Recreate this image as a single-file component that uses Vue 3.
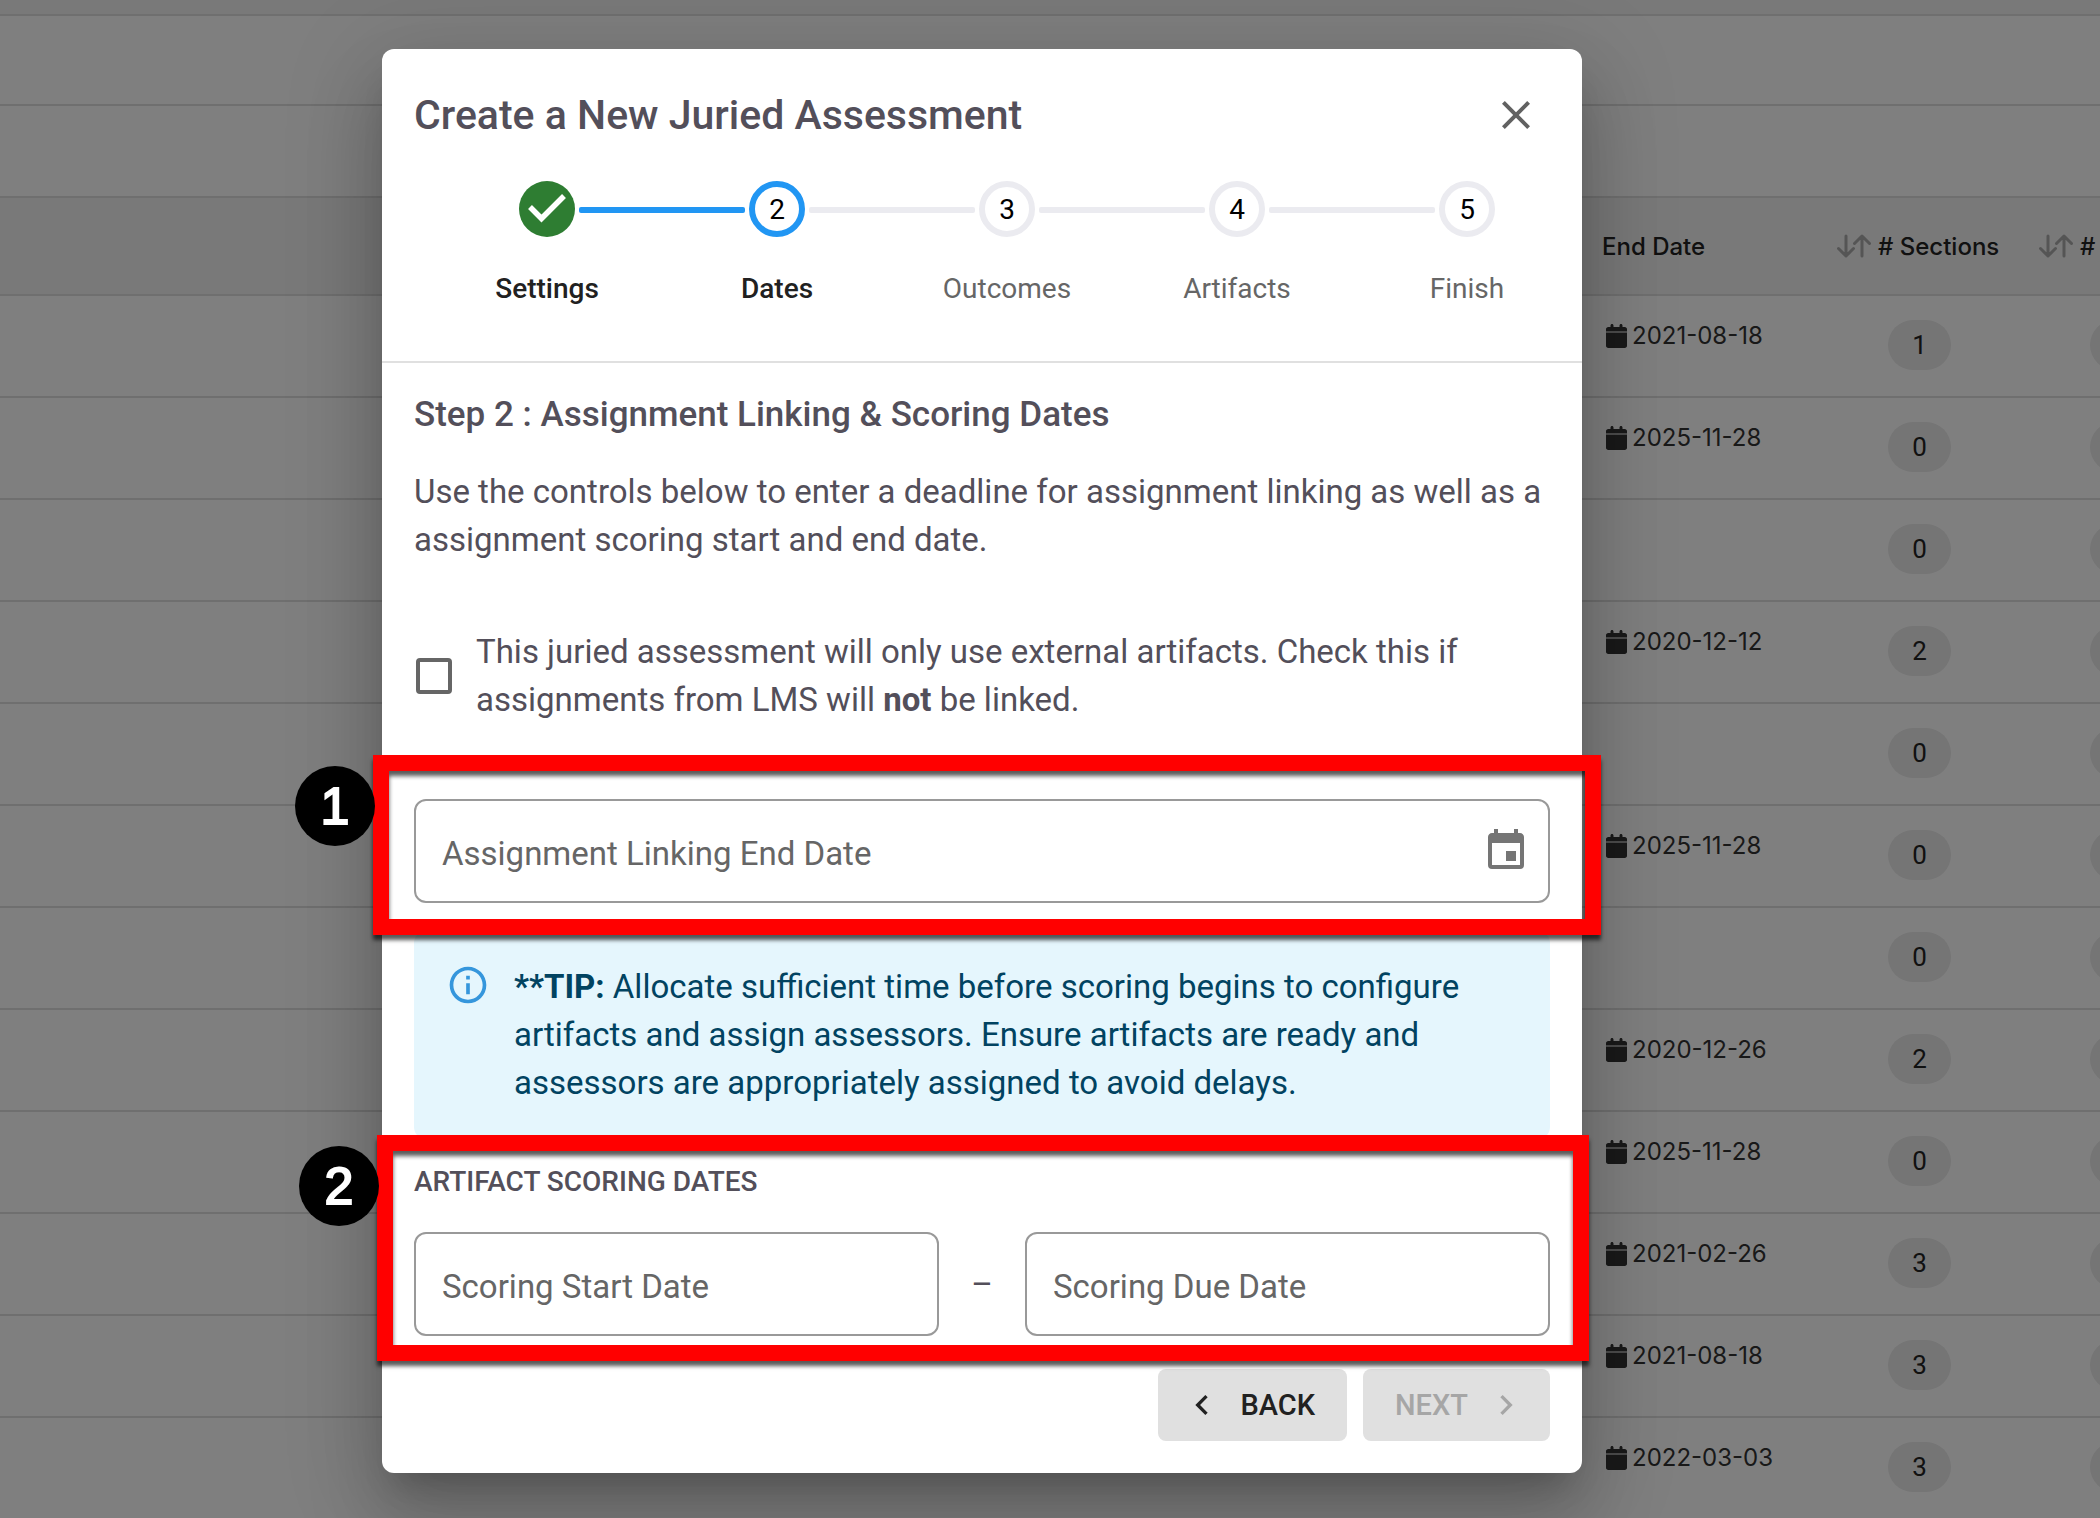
<script setup>
import { ref } from 'vue';

const steps = [
  { label: 'Settings', state: 'done' },
  { label: 'Dates', state: 'current' },
  { label: 'Outcomes', state: 'todo' },
  { label: 'Artifacts', state: 'todo' },
  { label: 'Finish', state: 'todo' },
];

const rows = [
  { endDate: '2021-08-18', sections: 1 },
  { endDate: '2025-11-28', sections: 0 },
  { endDate: '', sections: 0 },
  { endDate: '2020-12-12', sections: 2 },
  { endDate: '', sections: 0 },
  { endDate: '2025-11-28', sections: 0 },
  { endDate: '', sections: 0 },
  { endDate: '2020-12-26', sections: 2 },
  { endDate: '2025-11-28', sections: 0 },
  { endDate: '2021-02-26', sections: 3 },
  { endDate: '2021-08-18', sections: 3 },
  { endDate: '2022-03-03', sections: 3 },
];

const externalOnly = ref(false);
const linkingEnd = ref('');
const scoringStart = ref('');
const scoringDue = ref('');
</script>

<template>
  <div class="page">
    <div class="backdrop-page">
      <div class="toolbar-edge"></div>
      <div class="filter-row"></div>
      <div class="filter-row filter-row-tall"></div>
      <table class="assessments">
        <colgroup>
          <col />
          <col class="col-date" />
          <col class="col-sections" />
          <col class="col-last" />
        </colgroup>
        <thead>
          <tr>
            <th></th>
            <th>End Date</th>
            <th v-for="title in ['# Sections', '#']" :key="title">
              <span class="sortable">
                <svg class="sort-icon" viewBox="0 0 34 24" fill="none" stroke="currentColor" stroke-width="3" stroke-linecap="round" stroke-linejoin="round"><path d="M9 2v20M1.500 14.500L9 22l7.500-7.500M25 22V2M17.500 9.500L25 2l7.500 7.500" /></svg>
                {{ title }}
              </span>
            </th>
          </tr>
        </thead>
        <tbody>
          <tr v-for="(row, i) in rows" :key="i">
            <td></td>
            <td>
              <span v-if="row.endDate" class="date">
                <svg class="date-icon" viewBox="0 0 448 512" fill="currentColor"><path d="M128 0c17.700 0 32 14.300 32 32v32h128V32c0-17.700 14.300-32 32-32s32 14.300 32 32v32h48c26.500 0 48 21.500 48 48v48H0v-48C0 85.500 21.500 64 48 64h48V32c0-17.700 14.300-32 32-32zM0 180h448v284c0 26.500-21.500 48-48 48H48c-26.500 0-48-21.500-48-48V180z" /></svg>
                {{ row.endDate }}
              </span>
            </td>
            <td><span class="count">{{ row.sections }}</span></td>
            <td><span class="count"></span></td>
          </tr>
        </tbody>
      </table>
    </div>

    <div class="overlay">
      <section class="dialog" role="dialog" aria-labelledby="dialog-title">
        <header class="dialog-header">
          <div class="title-row">
            <h1 id="dialog-title">Create a New Juried Assessment</h1>
            <button class="close-btn" type="button" aria-label="Close">
              <svg viewBox="0 0 24 24" fill="currentColor"><path d="M19 6.410L17.590 5 12 10.590 6.410 5 5 6.410 10.590 12 5 17.590 6.410 19 12 13.410 17.590 19 19 17.590 13.410 12z" /></svg>
            </button>
          </div>
          <ol class="stepper">
            <li v-for="(step, i) in steps" :key="step.label" class="step" :class="step.state">
              <span class="step-circle">
                <svg v-if="step.state === 'done'" viewBox="0 0 56 56" fill="none" stroke="currentColor" stroke-width="5.500"><path d="M11 26l11.500 11.500L45 15" /></svg>
                <template v-else>{{ i + 1 }}</template>
              </span>
              <span class="step-label">{{ step.label }}</span>
            </li>
          </ol>
        </header>

        <div class="dialog-body">
          <h2>Step 2 : Assignment Linking &amp; Scoring Dates</h2>
          <p class="intro">Use the controls below to enter a deadline for assignment linking as well as a assignment scoring start and end date.</p>

          <label class="external">
            <input v-model="externalOnly" type="checkbox" />
            <span>This juried assessment will only use external artifacts. Check this if assignments from LMS will <strong>not</strong> be linked.</span>
          </label>

          <div class="marked marked-linking">
            <div class="field">
              <input v-model="linkingEnd" type="text" placeholder="Assignment Linking End Date" aria-label="Assignment Linking End Date" />
              <svg class="field-icon" viewBox="0 0 24 24" fill="currentColor"><path d="M19 19H5V8h14m-3-7v2H8V1H6v2H5c-1.110 0-2 .890-2 2v14a2 2 0 0 0 2 2h14a2 2 0 0 0 2-2V5c0-1.110-.900-2-2-2h-1V1h-2m1 11h-5v5h5v-5z" /></svg>
            </div>
            <div class="callout callout-linking"><span class="callout-number">1</span></div>
          </div>

          <div class="tip">
            <svg class="tip-icon" viewBox="0 0 24 24" fill="currentColor"><path d="M11 7h2v2h-2zm0 4h2v6h-2zm1-9C6.480 2 2 6.480 2 12s4.480 10 10 10 10-4.480 10-10S17.520 2 12 2zm0 18c-4.410 0-8-3.590-8-8s3.590-8 8-8 8 3.590 8 8-3.590 8-8 8z" /></svg>
            <p><strong>**TIP:</strong> Allocate sufficient time before scoring begins to configure artifacts and assign assessors. Ensure artifacts are ready and assessors are appropriately assigned to avoid delays.</p>
          </div>

          <div class="marked">
            <h3>ARTIFACT SCORING DATES</h3>
            <div class="date-range">
              <div class="field">
                <input v-model="scoringStart" type="text" placeholder="Scoring Start Date" aria-label="Scoring Start Date" />
              </div>
              <span class="dash">–</span>
              <div class="field">
                <input v-model="scoringDue" type="text" placeholder="Scoring Due Date" aria-label="Scoring Due Date" />
              </div>
            </div>
            <div class="callout callout-scoring"><span class="callout-number">2</span></div>
          </div>
        </div>

        <footer class="dialog-footer">
          <button class="nav-btn" type="button">
            <svg viewBox="0 0 24 24" fill="currentColor"><path d="M15.410 7.410L14 6l-6 6 6 6 1.410-1.410L10.830 12z" /></svg>
            BACK
          </button>
          <button class="nav-btn" type="button" disabled>
            NEXT
            <svg viewBox="0 0 24 24" fill="currentColor"><path d="M8.590 16.590L10 18l6-6-6-6-1.410 1.410L13.170 12z" /></svg>
          </button>
        </footer>
      </section>
    </div>
  </div>
</template>

<style>
body {
    margin: 0;
    background: white;
}
</style>

<style scoped>
.page {
    position: relative;
    height: 100vh;
    overflow: hidden;
    font-family: Roboto, "Liberation Sans", sans-serif;
    color: #534f5a;
}

h1, h2, h3, p, ol {
    margin: 0;
    padding: 0;
}

/* Assessment list behind the dialog */
.backdrop-page {
    font-family: Inter, "Liberation Sans", sans-serif;
    color: #222;
}

.toolbar-edge {
    height: 14px;
    background: #f3f3f3;
    border-bottom: 2px solid #dedede;
}

.filter-row {
    height: 88px;
    border-bottom: 2px solid #dedede;
}

.filter-row-tall {
    height: 90px;
}

.assessments {
    width: 100%;
    table-layout: fixed;
    border-collapse: separate;
    border-spacing: 0;
    font-size: 24px;
}

.col-date {
    width: 235px;
}

.col-sections {
    width: 202px;
}

.col-last {
    width: 61px;
}

.assessments th,
.assessments td {
    box-sizing: border-box;
    padding: 0;
    text-align: left;
    border-bottom: 2px solid #dedede;
}

.assessments th {
    height: 98px;
    background: #f3f3f3;
    font-weight: 500;
    white-space: nowrap;
}

.assessments td {
    height: 102px;
    padding-top: 24px;
    vertical-align: top;
}

.sortable {
    display: flex;
    align-items: center;
    gap: 7px;
}

.sort-icon {
    width: 34px;
    height: 24px;
    flex-shrink: 0;
    color: #aaa;
}

.date {
    display: flex;
    align-items: center;
    gap: 5px;
    padding-left: 4px;
    line-height: 32px;
    color: #333;
}

.date-icon {
    width: 21px;
    height: 24px;
}

.count {
    display: flex;
    align-items: center;
    justify-content: center;
    width: 63px;
    height: 50px;
    margin-left: 51px;
    border-radius: 25px;
    background: #eaeaea;
    font-family: Roboto, "Liberation Sans", sans-serif;
    font-size: 26px;
}

/* Dialog */
.overlay {
    position: absolute;
    inset: 0;
    display: flex;
    justify-content: center;
    align-items: flex-start;
    padding: 49px 136px 0 0;
    background: rgba(0, 0, 0, 0.5);
}

.dialog {
    width: 100%;
    max-width: 1200px;
    border-radius: 12px;
    background: white;
    box-shadow:
        0 22px 30px -14px rgba(0, 0, 0, 0.2),
        0 48px 76px 6px rgba(0, 0, 0, 0.14),
        0 18px 92px 16px rgba(0, 0, 0, 0.12);
}

.dialog-header {
    padding: 32px 32px 52px;
    border-bottom: 2px solid #e0e0e0;
}

.title-row {
    display: flex;
    justify-content: space-between;
    align-items: center;
    height: 68px;
}

h1 {
    font-size: 41px;
    font-weight: 500;
    line-height: 64px;
}

.close-btn {
    display: flex;
    padding: 10px;
    border: none;
    background: none;
    color: #616161;
    cursor: pointer;
}

.close-btn svg {
    width: 48px;
    height: 48px;
}

.stepper {
    display: flex;
    margin: 0 -32px 0 18px;
    padding-top: 32px;
    list-style: none;
}

.step {
    position: relative;
    display: flex;
    flex: 1;
    flex-direction: column;
    align-items: center;
    gap: 32px;
}

/* Connector to the next step */
.step:not(:last-child)::after {
    content: "";
    position: absolute;
    top: 26px;
    left: calc(50% + 32px);
    width: calc(100% - 64px);
    height: 6px;
    border-radius: 2px;
    background: #ebebf0;
}

.step.done::after {
    background: #2196f3;
}

.step-circle {
    box-sizing: border-box;
    display: flex;
    align-items: center;
    justify-content: center;
    width: 56px;
    height: 56px;
    border: 6px solid #ebebf0;
    border-radius: 50%;
    color: black;
    font-size: 28px;
}

.current .step-circle {
    border-color: #2196f3;
}

.done .step-circle {
    border: none;
    background: #2e7d32;
    color: white;
}

.step-circle svg {
    width: 56px;
    height: 56px;
}

.step-label {
    font-size: 28px;
    line-height: 40px;
    color: #666;
}

.done .step-label,
.current .step-label {
    color: #212121;
    font-weight: 500;
}

.dialog-body {
    padding: 27px 32px 0;
}

h2 {
    font-size: 35px;
    font-weight: 500;
    line-height: 50px;
}

.intro {
    margin-top: 28px;
    font-size: 33px;
    line-height: 48px;
}

.external {
    display: flex;
    align-items: center;
    gap: 24px;
    margin-top: 64px;
    padding-left: 2px;
    font-size: 33px;
    line-height: 48px;
}

.external input {
    appearance: none;
    flex-shrink: 0;
    width: 36px;
    height: 36px;
    margin: 0;
    border: 4px solid #666;
    border-radius: 4px;
}

.marked {
    position: relative;
}

.marked-linking {
    margin-top: 75px;
}

.field {
    box-sizing: border-box;
    display: flex;
    flex: 1;
    align-items: center;
    height: 104px;
    padding: 0 18px 0 26px;
    border: 2px solid #999;
    border-radius: 12px;
}

.field input {
    flex: 1;
    min-width: 0;
    padding: 4px 0 0;
    border: none;
    outline: none;
    background: none;
    font: inherit;
    font-size: 33px;
}

.field input::placeholder {
    color: #666;
    opacity: 1;
}

.field-icon {
    width: 48px;
    height: 48px;
    color: #757575;
}

.tip {
    display: flex;
    gap: 24px;
    margin-top: 28px;
    padding: 32px;
    border-radius: 12px;
    background: #e5f6fd;
    color: #014361;
    font-size: 33px;
    line-height: 48px;
}

.tip p {
    max-width: 960px;
}

.tip-icon {
    flex-shrink: 0;
    width: 44px;
    height: 44px;
    color: #3596dc;
}

h3 {
    padding-top: 23px;
    font-size: 28px;
    font-weight: 500;
    line-height: 40px;
}

.date-range {
    display: flex;
    align-items: center;
    gap: 32px;
    margin-top: 30px;
}

.dash {
    width: 22px;
    text-align: center;
    font-size: 33px;
}

/* Red annotation frames laid over the form */
.callout {
    position: absolute;
    box-sizing: border-box;
    border: 16px solid #ff0000;
    box-shadow:
        0 5px 4px rgba(0, 0, 0, 0.65),
        inset 0 5px 4px rgba(0, 0, 0, 0.65);
    pointer-events: none;
}

.callout-linking {
    inset: -44px -51px -32px -41px;
}

.callout-scoring {
    inset: -4px -39px -25px -37px;
}

.callout-number {
    position: absolute;
    top: -5px;
    right: 100%;
    display: flex;
    align-items: center;
    justify-content: center;
    width: 80px;
    height: 80px;
    margin-right: 14px;
    border-radius: 50%;
    background: black;
    color: white;
    font-family: "Liberation Sans", sans-serif;
    font-size: 52px;
    -webkit-text-stroke: 2px white;
}

.dialog-footer {
    display: flex;
    justify-content: flex-end;
    gap: 16px;
    padding: 33px 32px 32px;
}

.nav-btn {
    display: flex;
    align-items: center;
    gap: 18px;
    height: 72px;
    padding: 0 32px 0 24px;
    border: none;
    border-radius: 8px;
    background: #e0e0e0;
    color: #212121;
    font-family: inherit;
    font-size: 29px;
    font-weight: 500;
    cursor: pointer;
}

.nav-btn:disabled {
    padding: 0 24px 0 32px;
    color: #a6a6a6;
    cursor: default;
}

.nav-btn svg {
    width: 40px;
    height: 40px;
}
</style>
